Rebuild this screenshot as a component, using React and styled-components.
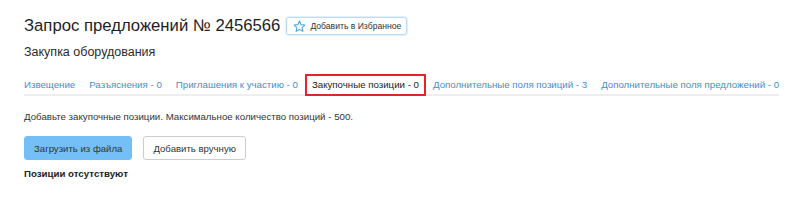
import React from 'react';
import styled, { createGlobalStyle } from 'styled-components';

const GlobalStyle = createGlobalStyle`
  body {
    margin: 0;
    background: #fff;
    font-family: "Liberation Sans", Arial, sans-serif;
    color: #333;
  }
`;

const Page = styled.div`
  padding: 16px 24px 0;
`;

const Header = styled.div`
  display: flex;
  align-items: center;
  gap: 6px;
`;

const Title = styled.h1`
  margin: 0;
  font-size: 16.7px;
  line-height: 20px;
  font-weight: normal;
  color: #1e1e1e;
`;

const FavButton = styled.button`
  display: flex;
  align-items: center;
  gap: 4px;
  height: 18px;
  padding: 0 5px 0 6px;
  border: 1px solid #b9dcf6;
  box-shadow: 0 0 0 1px #e3f1fc;
  border-radius: 3px;
  background: #fff;
  font-family: inherit;
  font-size: 8.6px;
  color: #333;
  cursor: pointer;
`;

const Subtitle = styled.div`
  margin-top: 8px;
  font-size: 12.5px;
  line-height: 16px;
  color: #2b2b2b;
`;

const Tabs = styled.nav`
  display: inline-flex;
  gap: 14px;
  margin-top: 14px;
  border-bottom: 2px solid #eeeeee;
`;

const Tab = styled.a`
  display: block;
  font-size: 9.7px;
  line-height: 18px;
  white-space: nowrap;
  text-decoration: none;
  margin-bottom: -2px;
  padding: 2px 0;
  color: ${p => (p.$active ? '#222' : '#3f8fd2')};
  ${p =>
    p.$active &&
    `
    border: 2px solid #e0252b;
    padding: 0 5px;
    margin: 0 -7px -2px;
  `}
`;

const Note = styled.p`
  margin: 14px 0 0;
  font-size: 9.7px;
  line-height: 14px;
  color: #333;
`;

const Actions = styled.div`
  display: flex;
  gap: 11px;
  margin-top: 12px;
`;

const Button = styled.button`
  height: 24px;
  padding: 0 9px;
  border-radius: 3px;
  font-family: inherit;
  font-size: 9.6px;
  color: #333;
  cursor: pointer;
  border: 1px solid ${p => (p.$primary ? '#74c0f6' : '#cccccc')};
  background: ${p => (p.$primary ? '#74c0f6' : '#fff')};
`;

const Empty = styled.div`
  margin-top: 7px;
  font-size: 9.7px;
  line-height: 14px;
  font-weight: bold;
  color: #222;
`;

const StarIcon = () => (
  <svg width="13" height="13" viewBox="0 0 24 24" fill="none" stroke="#4fa6e3" strokeWidth="2" strokeLinejoin="round">
    <polygon points="12 2 15.1 8.6 22 9.3 16.8 14 18.2 21 12 17.5 5.8 21 7.2 14 2 9.3 8.9 8.6" />
  </svg>
);

const tabs = [
  'Извещение',
  'Разъяснения - 0',
  'Приглашения к участию - 0',
  'Закупочные позиции - 0',
  'Дополнительные поля позиций - 3',
  'Дополнительные поля предложений - 0',
];

const App = () => (
  <>
    <GlobalStyle />
    <Page>
      <Header>
        <Title>Запрос предложений № 2456566</Title>
        <FavButton>
          <StarIcon />
          Добавить в Избранное
        </FavButton>
      </Header>
      <Subtitle>Закупка оборудования</Subtitle>
      <Tabs>
        {tabs.map((t, i) => (
          <Tab key={t} href="#" $active={i === 3}>
            {t}
          </Tab>
        ))}
      </Tabs>
      <Note>Добавьте закупочные позиции. Максимальное количество позиций - 500.</Note>
      <Actions>
        <Button $primary>Загрузить из файла</Button>
        <Button>Добавить вручную</Button>
      </Actions>
      <Empty>Позиции отсутствуют</Empty>
    </Page>
  </>
);

export default App;
